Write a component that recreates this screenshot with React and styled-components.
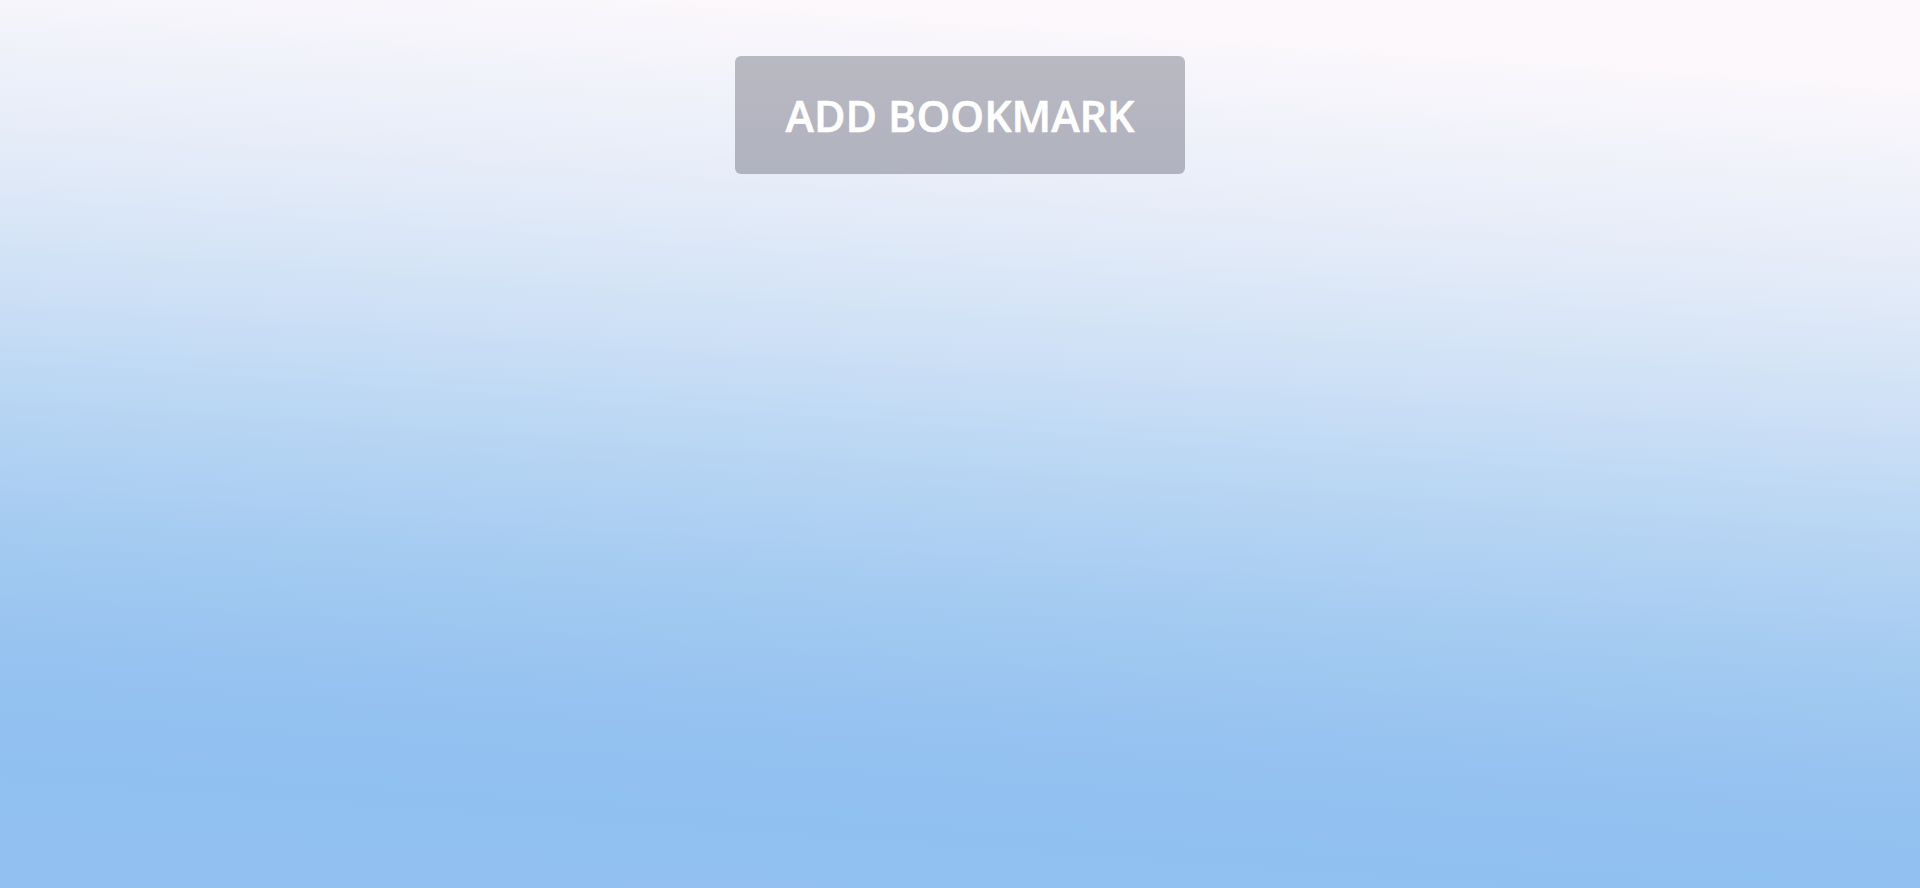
import React from 'react';
import styled, { createGlobalStyle } from 'styled-components';

const GlobalStyle = createGlobalStyle`
  html, body {
    margin: 0;
    padding: 0;
    height: 100%;
  }
  #root {
    height: 100%;
  }
`;

const Page = styled.main`
  min-height: 100vh;
  box-sizing: border-box;
  display: flex;
  flex-direction: column;
  align-items: center;
  padding-top: 56px;
  background: linear-gradient(
    184deg,
    #fdf8fc 0%,
    #fcf8fc 8%,
    #f2f3fa 16%,
    #e3ebf8 28%,
    #cfe1f6 40%,
    #b7d5f3 53%,
    #a3caf1 66%,
    #95c2f0 78%,
    #90c0f0 88%,
    #92c1f0 100%
  );
  font-family: 'Open Sans', 'Noto Sans', sans-serif;
`;

const BookmarkButton = styled.button`
  width: 450px;
  height: 118px;
  border: none;
  border-radius: 6px;
  background: linear-gradient(180deg, #b9b9c2 0%, #b0b2bf 100%);
  color: #ffffff;
  font-family: inherit;
  font-size: 43px;
  font-weight: 600;
  -webkit-text-stroke: 0.6px #ffffff;
  letter-spacing: 0;
  text-transform: uppercase;
  cursor: pointer;
  display: flex;
  align-items: center;
  justify-content: center;
`;

export default function App() {
  return (
    <>
      <GlobalStyle />
      <Page>
        <BookmarkButton type="button">Add Bookmark</BookmarkButton>
      </Page>
    </>
  );
}
